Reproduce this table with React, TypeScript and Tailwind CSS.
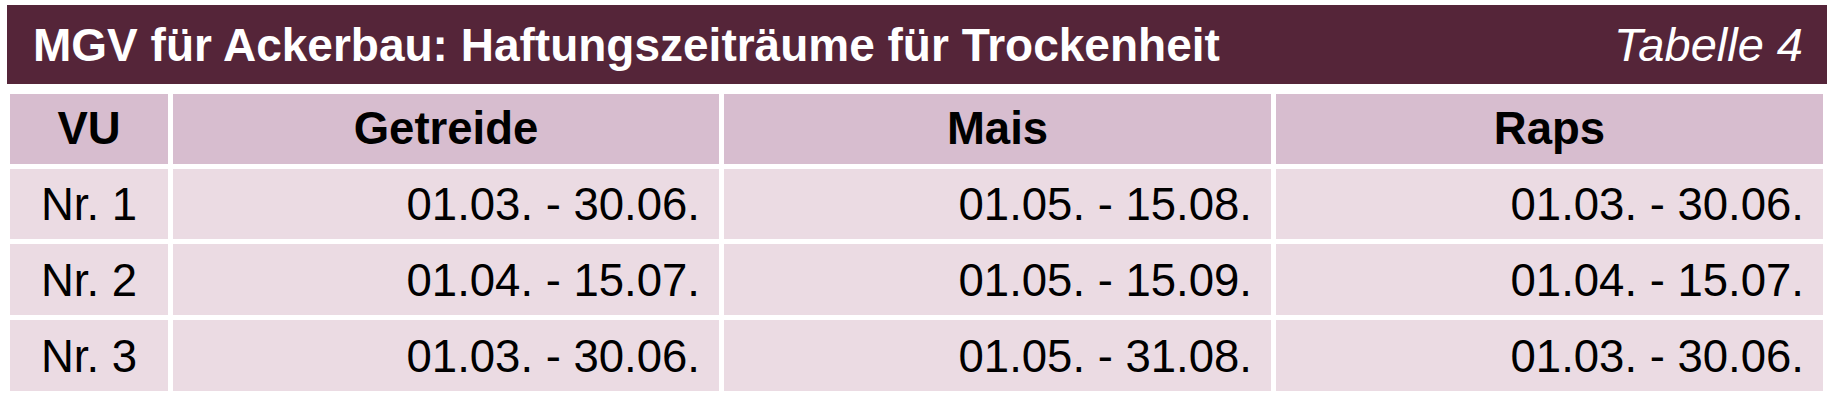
import React from "react";

const rows = [
  { vu: "Nr. 1", g: "01.03. - 30.06.", m: "01.05. - 15.08.", r: "01.03. - 30.06." },
  { vu: "Nr. 2", g: "01.04. - 15.07.", m: "01.05. - 15.09.", r: "01.04. - 15.07." },
  { vu: "Nr. 3", g: "01.03. - 30.06.", m: "01.05. - 31.08.", r: "01.03. - 30.06." },
];

export default function App() {
  return (
    <div
      className="w-[1833px] h-[400px] bg-white text-black"
      style={{ fontFamily: '"Liberation Sans", Arial, sans-serif' }}
    >
      <div className="pt-[5px] pl-[7px]">
        <div className="w-[1820px] h-[79px] bg-[#552539] text-white flex items-center justify-between pl-[26px] pr-[24px]">
          <span className="text-[46px] font-bold leading-none">
            MGV für Ackerbau: Haftungszeiträume für Trockenheit
          </span>
          <span className="text-[47px] italic leading-none">Tabelle 4</span>
        </div>
      </div>
      <div className="pl-[10px] pt-[10px]">
        <div className="grid grid-cols-[158px_546px_547px_547px] grid-rows-[70px_70px_71px_71px] gap-[5px] w-[1813px] text-[45.5px] leading-none">
          <div className="bg-[#d7bdcf] font-bold flex items-center justify-center">VU</div>
          <div className="bg-[#d7bdcf] font-bold flex items-center justify-center">Getreide</div>
          <div className="bg-[#d7bdcf] font-bold flex items-center justify-center">Mais</div>
          <div className="bg-[#d7bdcf] font-bold flex items-center justify-center">Raps</div>
          {rows.map((row) => (
            <React.Fragment key={row.vu}>
              <div className="bg-[#ebdbe3] flex items-center justify-center pt-[2px]">{row.vu}</div>
              <div className="bg-[#ebdbe3] flex items-center justify-end pr-[19px] pt-[2px]">{row.g}</div>
              <div className="bg-[#ebdbe3] flex items-center justify-end pr-[19px] pt-[2px]">{row.m}</div>
              <div className="bg-[#ebdbe3] flex items-center justify-end pr-[19px] pt-[2px]">{row.r}</div>
            </React.Fragment>
          ))}
        </div>
      </div>
    </div>
  );
}
